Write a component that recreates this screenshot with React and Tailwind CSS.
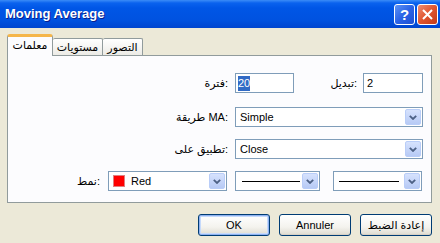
import React from "react";

const Chevron = () => (
  <svg width="8" height="5" viewBox="0 0 8 5">
    <path d="M0.8 0.8 L4 4 L7.2 0.8" fill="none" stroke="#4D6185" strokeWidth="1.8" />
  </svg>
);

const DropBtn = () => (
  <div className="ml-auto w-[16px] h-full flex items-center justify-center rounded-[2px] border border-[#B9CDF8] bg-[linear-gradient(180deg,#D6E2FD,#B7CAF5)]">
    <Chevron />
  </div>
);

const Select = ({ w, children }) => (
  <div className={`${w} h-[20px] shrink-0 border border-[#7F9DB9] bg-white flex items-center p-[1px]`}>
    <div className="flex-1 flex items-center h-full min-w-0">{children}</div>
    <DropBtn />
  </div>
);

const Line = ({ w }) => <div className={`${w} h-px bg-black`} />;

const Btn = ({ children, def }) => (
  <div
    className={`w-[72px] h-[22px] rounded-[3px] border border-[#003C74] flex items-center justify-center text-black bg-[linear-gradient(180deg,#FFFFFF,#F4F3EE_60%,#DEDBD0)] ${
      def ? "shadow-[inset_0_0_0_1px_#8FB2F0,inset_0_0_0_2px_#C6DAFB]" : "shadow-[inset_0_-1px_0_#D6D0C5]"
    }`}
  >
    {children}
  </div>
);

export default function App() {
  return (
    <div className="w-[440px] h-[243px] bg-[#ECE9D8] flex flex-col overflow-hidden font-['Liberation_Sans','DejaVu_Sans',sans-serif] text-[11px] text-black">
      {/* title bar */}
      <div className="h-[28px] shrink-0 flex items-center bg-[linear-gradient(180deg,#3b8cf7_0px,#0a62ee_3px,#0056e6_8px,#0052e0_20px,#0045cf_28px)]">
        <div className="pl-[5px] text-white font-bold text-[13px] [text-shadow:1px_1px_0_#0A1E8C]">Moving Average</div>
        <div className="ml-auto flex gap-[2px] mr-[2px]">
          <div className="w-[21px] h-[21px] rounded-[3px] border border-white flex items-center justify-center bg-[linear-gradient(135deg,#5D93F5,#2B63E6_50%,#1D4FD2)] text-white font-bold text-[15px] leading-none">?</div>
          <div className="w-[21px] h-[21px] rounded-[3px] border border-white flex items-center justify-center bg-[linear-gradient(135deg,#EE8E74,#E0552F_50%,#C43A17)]">
            <svg width="11" height="11" viewBox="0 0 11 11">
              <path d="M1 1 L10 10 M10 1 L1 10" stroke="white" strokeWidth="2" />
            </svg>
          </div>
        </div>
      </div>

      {/* tabs */}
      <div className="mt-[6px] h-[21px] pl-[7px] flex items-end">
        <div className="relative z-10 -mb-px w-[46px] h-[22px] bg-[#FCFCFE] border-l border-r border-[#919B9C] border-t-[3px] border-t-[#F5B64A] rounded-t-[3px] flex items-center justify-center pb-[2px]">
          معلمات
        </div>
        <div className="w-[50px] h-[17px] border-t border-r border-[#919B9C] rounded-t-[2px] bg-[linear-gradient(180deg,#FFFFFF,#ECEBE6)] flex items-center justify-center">
          مستويات
        </div>
        <div className="w-[40px] h-[17px] border-t border-r border-[#919B9C] rounded-t-[2px] bg-[linear-gradient(180deg,#FFFFFF,#ECEBE6)] flex items-center justify-center">
          التصور
        </div>
      </div>

      {/* panel */}
      <div className="ml-[7px] w-[425px] h-[148px] border border-[#919B9C] bg-[#FCFCFE] flex flex-col pt-[17px] pr-[8px]">
        {/* row 1 */}
        <div className="h-[20px] flex items-center">
          <div className="flex-1 text-right">فترة:</div>
          <div className="ml-[7px] w-[59px] h-[20px] border border-[#7F9DB9] bg-white flex items-center pl-[2px]">
            <span className="bg-[#316AC5] text-white px-[0px] leading-[15px]">20</span>
          </div>
          <div className="w-[63px] text-right">تبديل:</div>
          <div className="ml-[6px] w-[60px] h-[20px] border border-[#7F9DB9] bg-white flex items-center pl-[3px]">2</div>
        </div>
        {/* row 2 */}
        <div className="mt-[14px] h-[20px] flex items-center">
          <div className="flex-1 text-right">طريقة MA:</div>
          <div className="ml-[7px]">
            <Select w="w-[188px]">
              <span className="pl-[3px]">Simple</span>
            </Select>
          </div>
        </div>
        {/* row 3 */}
        <div className="mt-[12px] h-[20px] flex items-center">
          <div className="flex-1 text-right">تطبيق على:</div>
          <div className="ml-[7px]">
            <Select w="w-[188px]">
              <span className="pl-[3px]">Close</span>
            </Select>
          </div>
        </div>
        {/* row 4 */}
        <div className="mt-[12px] h-[20px] flex items-center pr-[1px]">
          <div className="flex-1 text-right">نمط:</div>
          <div className="ml-[8px]">
            <Select w="w-[119px]">
              <div className="ml-[3px] w-[12px] h-[12px] bg-[#FF0000] border border-[#E08080]" />
              <span className="ml-[6px]">Red</span>
            </Select>
          </div>
          <div className="ml-[8px]">
            <Select w="w-[85px]">
              <div className="ml-[5px]">
                <Line w="w-[58px]" />
              </div>
            </Select>
          </div>
          <div className="ml-[13px]">
            <Select w="w-[89px]">
              <div className="ml-[4px]">
                <Line w="w-[60px]" />
              </div>
            </Select>
          </div>
        </div>
      </div>

      {/* buttons */}
      <div className="mt-[11px] flex justify-end gap-[9px] pr-[8px]">
        <Btn def>OK</Btn>
        <Btn>Annuler</Btn>
        <Btn>إعادة الضبط</Btn>
      </div>
    </div>
  );
}
